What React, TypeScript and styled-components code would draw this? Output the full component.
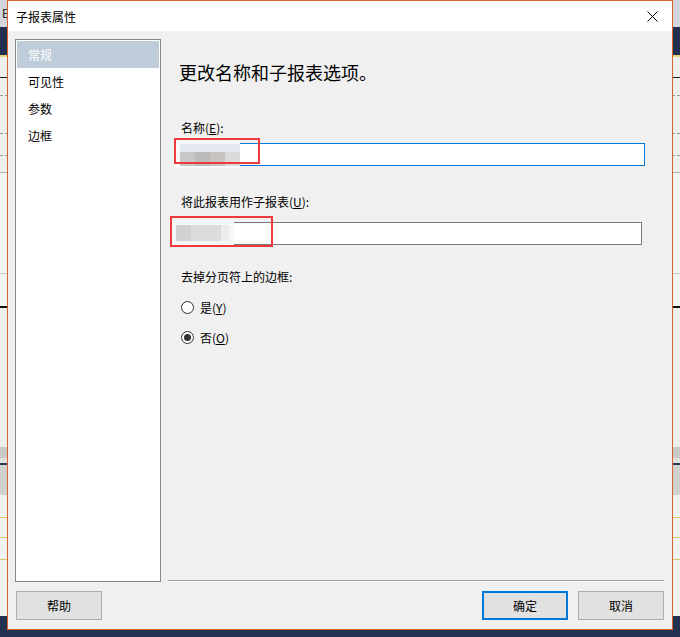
import React from 'react';
import styled, {createGlobalStyle} from 'styled-components';

const GlobalStyle = createGlobalStyle`
  html, body {
    margin: 0;
    padding: 0;
  }
  body {
    font-family: "Noto Sans CJK SC", "Noto Sans", sans-serif;
    color: #000;
  }
  #root {
    position: relative;
    width: 680px;
    height: 637px;
    overflow: hidden;
  }
`;

// Host application peeking out behind the dialog.
const Desktop = styled.div`
  display: flex;
  flex-direction: column;
  width: 680px;
  height: 637px;
  background: #efefef;
`;

const Band = styled.div<{$h: number; $bg: string; $dashed?: boolean}>`
  flex: none;
  height: ${({$h}) => $h}px;
  background: ${({$bg}) => $bg};
  ${({$dashed}) => ($dashed ? 'border-top: 1px dashed #9a9a9a; height: 0;' : '')}
`;

const AppMenu = styled.div`
  flex: none;
  height: 27px;
  background: #d2d5db;
  display: flex;
  align-items: center;
  padding-left: 2px;
  font-family: "Liberation Sans", sans-serif;
  font-size: 13px;
  color: #333;
`;

const Fill = styled.div`
  flex: 1;
  background: #f2f2f2;
`;

// Dialog window
const Window = styled.div`
  position: absolute;
  left: 7px;
  top: 0;
  width: 666px;
  height: 630px;
  box-sizing: border-box;
  border: 1px solid #d9622b;
  background: #f0f0f0;
  display: flex;
  flex-direction: column;
`;

const TitleBar = styled.div`
  flex: none;
  height: 30px;
  background: #fff;
  display: flex;
  align-items: center;
  justify-content: space-between;
  padding-left: 8px;
  font-size: 12px;
`;

const CloseButton = styled.div`
  width: 11px;
  height: 11px;
  margin-right: 14px;
  display: flex;
`;

const Body = styled.div`
  flex: 1;
  display: grid;
  grid-template-columns: 146px 1fr;
  grid-template-rows: 1fr 29px;
  column-gap: 7px;
  row-gap: 9px;
  padding: 8px 8px 9px 7px;
  min-height: 0;
`;

const Nav = styled.div`
  background: #fff;
  border: 1px solid #828790;
  padding: 1px;
  display: flex;
  flex-direction: column;
`;

const NavItem = styled.div<{$active?: boolean}>`
  height: 27px;
  line-height: 27px;
  padding-left: 11px;
  font-size: 12px;
  background: ${({$active}) => ($active ? '#bfcddb' : 'transparent')};
  color: ${({$active}) => ($active ? '#fff' : '#000')};
`;

const Panel = styled.div`
  display: flex;
  flex-direction: column;
`;

const Form = styled.div`
  flex: 1;
  display: flex;
  flex-direction: column;
  align-items: flex-start;
  padding-left: 13px;
`;

const Heading = styled.div`
  margin: 21px 0 0 -2px;
  font-size: 18px;
  line-height: 24px;
`;

const Label = styled.div<{$top: number}>`
  margin-top: ${({$top}) => $top}px;
  font-size: 12px;
  line-height: 16px;
`;

const Field = styled.div<{$top: number; $width: number; $focused?: boolean}>`
  position: relative;
  margin: ${({$top}) => $top}px 0 0 -5px;
  width: ${({$width}) => $width}px;
  height: 23px;
  box-sizing: border-box;
  background: #fff;
  border: 1px solid ${({$focused}) => ($focused ? '#0078d7' : '#7a7a7a')};
`;

// Blurred value hidden in the screenshot
const Smudge = styled.div<{$left: number; $width: number; $variant: 'a' | 'b'}>`
  position: absolute;
  left: ${({$left}) => $left}px;
  top: -3px;
  width: ${({$width}) => $width}px;
  height: 27px;
  background: #f7f7f7;

  &::after {
    content: '';
    position: absolute;
    left: 6px;
    top: ${({$variant}) => ($variant === 'a' ? '3px' : '5px')};
    height: ${({$variant}) => ($variant === 'a' ? '22px' : '16px')};
    width: ${({$variant}) => ($variant === 'a' ? '60px' : '53px')};
    background: ${({$variant}) =>
      $variant === 'a'
        ? `linear-gradient(to bottom, #e4e9ef 0 8px, transparent 8px),
           linear-gradient(to right, #c6c7c9 0 15px, #bbbbbb 15px 30px, #c7c3c0 30px 45px, #dadada 45px 60px)`
        : `linear-gradient(to right, #d3d1cf 0 15px, #dcdcdc 15px 45px, #ececec 45px 53px)`};
  }
`;

const Highlight = styled.div<{$left: number; $top: number; $width: number; $height: number}>`
  position: absolute;
  left: ${({$left}) => $left}px;
  top: ${({$top}) => $top}px;
  width: ${({$width}) => $width}px;
  height: ${({$height}) => $height}px;
  box-sizing: border-box;
  border: 2px solid #ee3a3d;
`;

const RadioRow = styled.label`
  margin-top: 14px;
  display: flex;
  align-items: center;
  gap: 6px;
  height: 16px;
  font-size: 12px;
`;

const RadioDot = styled.span<{$checked?: boolean}>`
  position: relative;
  width: 13px;
  height: 13px;
  box-sizing: border-box;
  border: 1px solid #333;
  border-radius: 50%;
  background: #fff;

  &::after {
    content: '';
    display: ${({$checked}) => ($checked ? 'block' : 'none')};
    position: absolute;
    left: 2px;
    top: 2px;
    width: 7px;
    height: 7px;
    border-radius: 50%;
    background: #333;
  }
`;

const Separator = styled.div`
  flex: none;
  border-top: 1px solid #a0a0a0;
  border-bottom: 1px solid #fff;
`;

const Footer = styled.div`
  display: flex;
  justify-content: flex-end;
  gap: 10px;
`;

const Button = styled.button<{$primary?: boolean}>`
  width: 86px;
  height: 29px;
  box-sizing: border-box;
  padding: 0;
  margin: 0;
  border: ${({$primary}) => ($primary ? '2px solid #0078d7' : '1px solid #adadad')};
  background: #e1e1e1;
  font-family: inherit;
  font-size: 12px;
  color: #000;
`;

const HelpButton = styled(Button)`
  margin-left: 1px;
`;

const navItems = ['常规', '可见性', '参数', '边框'];

export default function App() {
  return (
    <>
      <GlobalStyle />
      <Desktop>
        <AppMenu>Ei</AppMenu>
        <Band $h={28} $bg="#22304f" />
        <Band $h={2} $bg="#e8d27a" />
        <Band $h={20} $bg="#efefef" />
        <Band $h={1} $bg="#1a1a1a" />
        <Band $h={17} $bg="#efefef" />
        <Band $h={0} $bg="#efefef" $dashed />
        <Band $h={37} $bg="#efefef" />
        <Band $h={0} $bg="#efefef" $dashed />
        <Band $h={21} $bg="#efefef" />
        <Band $h={0} $bg="#efefef" $dashed />
        <Band $h={16} $bg="#efefef" />
        <Band $h={1} $bg="#b0b0b0" />
        <Band $h={100} $bg="#f4f4f4" />
        <Band $h={1} $bg="#c8c8c8" />
        <Band $h={32} $bg="#f4f4f4" />
        <Band $h={2} $bg="#111" />
        <Band $h={139} $bg="#efefef" />
        <Band $h={11} $bg="#c9c9c9" />
        <Band $h={5} $bg="#e0e0e0" />
        <Band $h={2} $bg="#2c3a5a" />
        <Band $h={30} $bg="#d0d0d0" />
        <Band $h={22} $bg="#f2f2f2" />
        <Band $h={1} $bg="#e2c261" />
        <Band $h={19} $bg="#f2f2f2" />
        <Band $h={1} $bg="#e2c261" />
        <Band $h={21} $bg="#f2f2f2" />
        <Band $h={1} $bg="#e2c261" />
        <Fill />
        <Band $h={21} $bg="#243150" />
      </Desktop>

      <Window>
        <TitleBar>
          子报表属性
          <CloseButton>
            <svg width="11" height="11" viewBox="0 0 11 11">
              <path d="M0.5 0.5 L10.5 10.5 M10.5 0.5 L0.5 10.5" stroke="#000" strokeWidth="1" />
            </svg>
          </CloseButton>
        </TitleBar>
        <Body>
          <Nav>
            {navItems.map((item, i) => (
              <NavItem key={item} $active={i === 0}>
                {item}
              </NavItem>
            ))}
          </Nav>
          <Panel>
            <Form>
              <Heading>更改名称和子报表选项。</Heading>
              <Label $top={36}>
                名称(<u>E</u>):
              </Label>
              <Field $top={7} $width={469} $focused>
                <Smudge $left={-3} $width={66} $variant="a" />
                <Highlight $left={-3} $top={-6} $width={86} $height={26} />
              </Field>
              <Label $top={28}>
                将此报表用作子报表(<u>U</u>):
              </Label>
              <Field $top={12} $width={466}>
                <Smudge $left={-7} $width={64} $variant="b" />
                <Highlight $left={-7} $top={-7} $width={103} $height={31} />
              </Field>
              <Label $top={24}>去掉分页符上的边框:</Label>
              <RadioRow>
                <RadioDot />
                <span>
                  是(<u>Y</u>)
                </span>
              </RadioRow>
              <RadioRow>
                <RadioDot $checked />
                <span>
                  否(<u>O</u>)
                </span>
              </RadioRow>
            </Form>
            <Separator />
          </Panel>
          <div>
            <HelpButton>帮助</HelpButton>
          </div>
          <Footer>
            <Button $primary>确定</Button>
            <Button>取消</Button>
          </Footer>
        </Body>
      </Window>
    </>
  );
}
